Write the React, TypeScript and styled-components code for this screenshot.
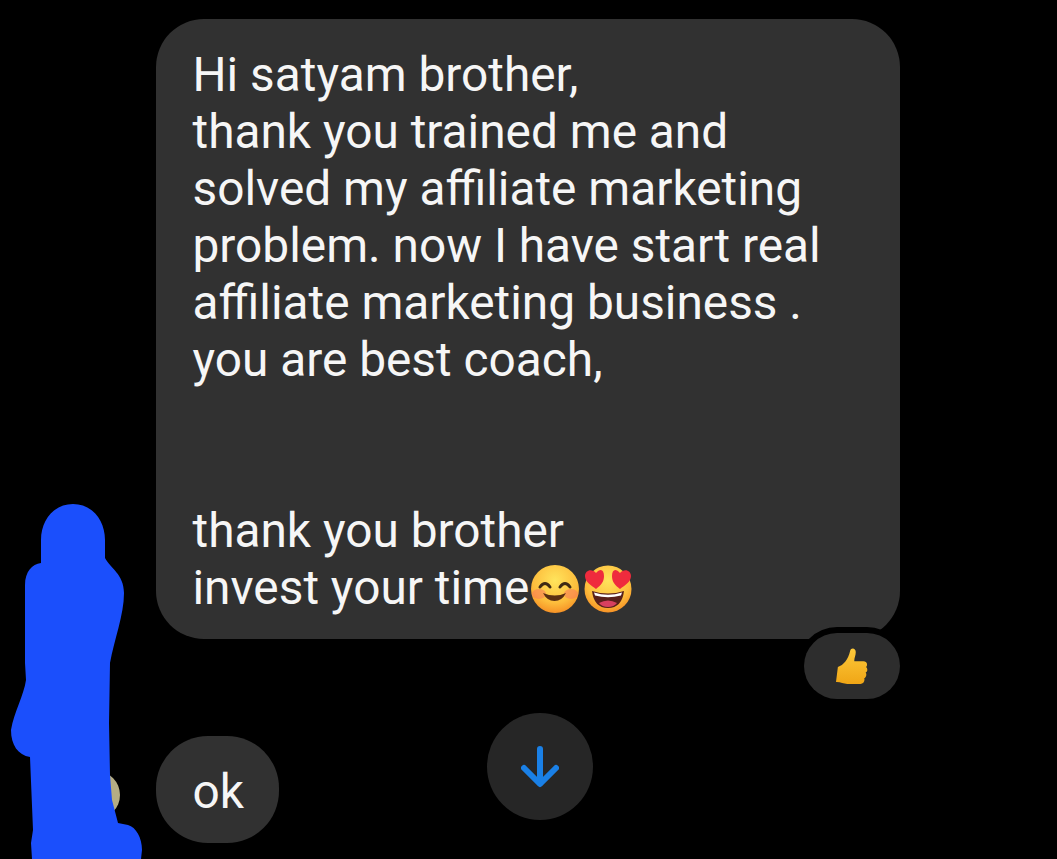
import React from 'react';
import styled, { createGlobalStyle } from 'styled-components';

const GlobalStyle = createGlobalStyle`
    html, body {
        margin: 0;
        padding: 0;
        background: #000;
    }
`;

const Screen = styled.div`
    position: relative;
    display: grid;
    grid-template-columns: 156px 744px;
    width: 1057px;
    height: 859px;
    overflow: hidden;
    background: #000;
    font-family: Roboto, "Liberation Sans", sans-serif;
    color: #f6f6f6;
`;

const AvatarColumn = styled.div`
    display: flex;
    align-items: flex-end;
`;

const Messages = styled.div`
    display: flex;
    flex-direction: column;
    align-items: flex-start;
    padding-top: 19px;
`;

const Bubble = styled.div`
    position: relative;
    box-sizing: border-box;
    width: 744px;
    height: 620px;
    padding: 28px 36.500px;
    border-radius: 48px;
    background: #313131;
    font-size: 47.8px;
    line-height: 57px;
    white-space: pre-line;
`;

const EmojiRow = styled.span`
    display: inline-flex;
    gap: 5px;
    vertical-align: -9px;
    margin-left: 2px;
`;

const Reaction = styled.div`
    position: absolute;
    right: 0;
    bottom: -60px;
    display: flex;
    align-items: center;
    justify-content: center;
    width: 96px;
    height: 66px;
    border-radius: 33px;
    background: #2d2d2d;
    box-shadow: 0 0 0 6px #000;
`;

const ShortBubble = styled.div`
    box-sizing: border-box;
    margin-top: 97px;
    width: 123px;
    height: 107px;
    padding: 28px 36.500px;
    border-radius: 52px;
    background: #313131;
    font-size: 47.8px;
    line-height: 57px;
`;

const ScrollButton = styled.div`
    position: absolute;
    left: 487px;
    top: 713px;
    display: flex;
    align-items: center;
    justify-content: center;
    width: 106px;
    height: 107px;
    border-radius: 50%;
    background: #262626;
`;

const Avatar = () => (
    <svg width="150" height="355" viewBox="0 504 150 355">
        <circle cx="96" cy="795" r="24" fill="#b5ad84" />
        <path
            fill="#1b4ffc"
            d="M73 504 C92 504 105 520 105 540 L105 558 C110 568 124 574 124 593
               C124 615 114 640 110 663 L109 723 L110 775 L112 800 L118 823 L128 825
               C136 827 142 838 142 850 L141 859 L32 859 L31 843 L33 830 L30 757
               C18 755 11 745 11 730 C14 712 24 695 26 680 L25 663 L25 585
               C25 572 32 564 41 563 L41 540 C41 520 54 504 73 504 Z"
        />
    </svg>
);

const SmileEmoji = () => (
    <svg width="48" height="48" viewBox="0 0 48 48">
        <defs>
            <radialGradient id="smileFace" cx="50%" cy="32%" r="72%">
                <stop offset="0%" stopColor="#ffe45c" />
                <stop offset="65%" stopColor="#fdbd3c" />
                <stop offset="100%" stopColor="#f58a22" />
            </radialGradient>
        </defs>
        <circle cx="24" cy="24" r="24" fill="url(#smileFace)" />
        <ellipse cx="8" cy="29" rx="7" ry="5" fill="#f7785a" opacity="0.55" />
        <ellipse cx="40" cy="29" rx="7" ry="5" fill="#f7785a" opacity="0.55" />
        <path d="M9 22 Q14 15 19 22" fill="none" stroke="#3f2a14" strokeWidth="3" strokeLinecap="round" />
        <path d="M29 22 Q34 15 39 22" fill="none" stroke="#3f2a14" strokeWidth="3" strokeLinecap="round" />
        <path d="M12 28 Q24 33 35 28 Q31 36 23.500 36 Q16 36 12 28 Z" fill="#5b2f12" />
    </svg>
);

const HeartEyesEmoji = () => (
    <svg width="48" height="48" viewBox="0 0 48 48">
        <defs>
            <radialGradient id="heartFace" cx="50%" cy="32%" r="72%">
                <stop offset="0%" stopColor="#ffe45c" />
                <stop offset="65%" stopColor="#fdbd3c" />
                <stop offset="100%" stopColor="#f58a22" />
            </radialGradient>
        </defs>
        <circle cx="24" cy="24" r="23.5" fill="url(#heartFace)" />
        <path d="M12 24 C7 20 1 17 1 11 C1 5 8 3 12 8 C16 3 20 4 20 11 C20 17 17 20 12 24 Z" fill="#ef2b3d" />
        <path d="M36 24 C31 20 28 17 28 11 C28 4 32 3 36 8 C40 3 47 5 47 11 C47 17 41 20 36 24 Z" fill="#ef2b3d" />
        <path d="M8 26 Q24 31 40 26 Q38 43 24 43 Q10 43 8 26 Z" fill="#58201a" />
        <path d="M10 27.500 Q24 32 38 27.500 L37 30.500 Q24 34 11 30.500 Z" fill="#fff" />
        <path d="M15 38 Q24 33 33 38 Q30 42 24 42 Q18 42 15 38 Z" fill="#d8405f" />
    </svg>
);

const ThumbEmoji = () => (
    <svg width="32" height="37" viewBox="0 0 34 39">
        <defs>
            <linearGradient id="thumbFill" x1="0" y1="0" x2="0" y2="1">
                <stop offset="0%" stopColor="#fdc93a" />
                <stop offset="100%" stopColor="#f0a616" />
            </linearGradient>
        </defs>
        <path
            fill="url(#thumbFill)"
            d="M15 3 C16 -1 21 0 21 4 C21 8 19 11 19.500 14 L29 14 C33 14 34 18 32 20
               C34 22 33.500 25 31.500 26 C33 28 32 31 30 32 C31 35 29 38 26 38
               L12 38 C8 38 5 36 1 36 L0 36 L2 20 C8 18 13 12 15 3 Z"
        />
    </svg>
);

const DownArrow = () => (
    <svg width="38" height="42" viewBox="0 0 38 42" fill="none" stroke="#1a80e6" strokeWidth="6" strokeLinecap="round" strokeLinejoin="round">
        <path d="M19 3 L19 37" />
        <path d="M3 22 L19 38 L35 22" />
    </svg>
);

const App: React.FC = () => {
    return (
        <Screen>
            <GlobalStyle />
            <AvatarColumn>
                <Avatar />
            </AvatarColumn>
            <Messages>
                <Bubble>
                    {`Hi satyam brother,
thank you trained me and
solved my affiliate marketing
problem. now I have start real
affiliate marketing business .
you are best coach,


thank you brother
invest your time`}
                    <EmojiRow>
                        <SmileEmoji />
                        <HeartEyesEmoji />
                    </EmojiRow>
                    <Reaction>
                        <ThumbEmoji />
                    </Reaction>
                </Bubble>
                <ShortBubble>ok</ShortBubble>
            </Messages>
            <ScrollButton>
                <DownArrow />
            </ScrollButton>
        </Screen>
    );
};

export default App;
